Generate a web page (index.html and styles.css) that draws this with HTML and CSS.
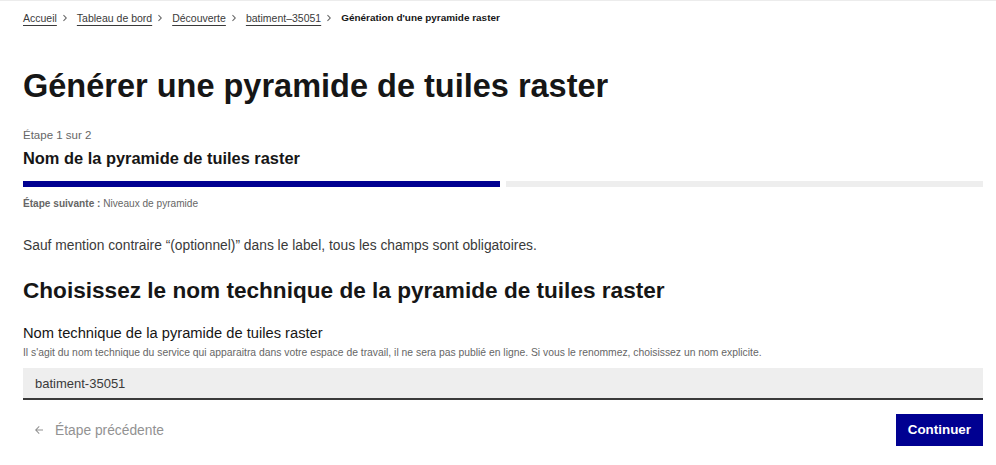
FILE: index.html
```html
<!DOCTYPE html>
<html lang="fr">
<head>
<meta charset="utf-8">
<title>Générer une pyramide de tuiles raster</title>
<link rel="stylesheet" href="styles.css">
</head>
<body>
<div class="page">
  <nav class="breadcrumb" aria-label="vous êtes ici :">
    <ol class="crumbs">
      <li><a class="crumb-link" href="#">Accueil</a></li>
      <li class="sep"><svg viewBox="0 0 24 24" class="chev"><path d="M13.172 12l-4.95-4.95 1.414-1.414L16 12l-6.364 6.364-1.414-1.414z"/></svg></li>
      <li><a class="crumb-link" href="#">Tableau de bord</a></li>
      <li class="sep"><svg viewBox="0 0 24 24" class="chev"><path d="M13.172 12l-4.95-4.95 1.414-1.414L16 12l-6.364 6.364-1.414-1.414z"/></svg></li>
      <li><a class="crumb-link" href="#">Découverte</a></li>
      <li class="sep"><svg viewBox="0 0 24 24" class="chev"><path d="M13.172 12l-4.95-4.95 1.414-1.414L16 12l-6.364 6.364-1.414-1.414z"/></svg></li>
      <li><a class="crumb-link" href="#">batiment–35051</a></li>
      <li class="sep"><svg viewBox="0 0 24 24" class="chev"><path d="M13.172 12l-4.95-4.95 1.414-1.414L16 12l-6.364 6.364-1.414-1.414z"/></svg></li>
      <li><span class="crumb-current" aria-current="page">Génération d'une pyramide raster</span></li>
    </ol>
  </nav>

  <h1 class="title">Générer une pyramide de tuiles raster</h1>

  <div class="stepper">
    <p class="stepper-state">Étape 1 sur 2</p>
    <h2 class="stepper-title">Nom de la pyramide de tuiles raster</h2>
    <div class="stepper-bars">
      <div class="bar bar-done"></div>
      <div class="bar"></div>
    </div>
    <p class="stepper-next"><span class="strong">Étape suivante :</span> Niveaux de pyramide</p>
  </div>

  <p class="mandatory">Sauf mention contraire “(optionnel)” dans le label, tous les champs sont obligatoires.</p>

  <h3 class="section-title">Choisissez le nom technique de la pyramide de tuiles raster</h3>

  <div class="field">
    <label class="label" for="tech-name">Nom technique de la pyramide de tuiles raster</label>
    <p class="hint">Il s'agit du nom technique du service qui apparaitra dans votre espace de travail, il ne sera pas publié en ligne. Si vous le renommez, choisissez un nom explicite.</p>
    <input class="input" id="tech-name" type="text" value="batiment-35051">
  </div>

  <div class="actions">
    <button class="btn-prev" type="button" disabled>
      <svg viewBox="0 0 24 24" class="arrow"><path d="M7.828 11H20v2H7.828l5.364 5.364-1.414 1.414L4 12l7.778-7.778 1.414 1.414z"/></svg>
      <span>Étape précédente</span>
    </button>
    <button class="btn-primary" type="button">Continuer</button>
  </div>
</div>
</body>
</html>
```
FILE: styles.css
```css
* { box-sizing: border-box; }

html, body {
  margin: 0;
  padding: 0;
  background: #ffffff;
}

body {
  font-family: "Liberation Sans", Arial, sans-serif;
  color: #3a3a3a;
  border-top: 1px solid #ececec;
}

.page {
  padding: 8px 13px 0 23px;
}

/* Breadcrumb */
.crumbs {
  list-style: none;
  margin: 0;
  padding: 0;
  display: flex;
  align-items: center;
  font-size: 10.5px;
  line-height: 16px;
}

.crumb-link {
  color: #3a3a3a;
  text-decoration: underline;
  text-decoration-color: #3a3a3a;
  text-underline-offset: 3px;
  text-decoration-thickness: 1px;
}

.crumb-current {
  color: #161616;
  font-weight: bold;
  font-size: 9.95px;
}

.sep {
  display: flex;
  align-items: center;
  margin: 0 6px 0 2px;
}

.chev {
  width: 12px;
  height: 12px;
  fill: #666666;
}

/* Title */
.title {
  margin: 40px 0 0;
  font-size: 32.5px;
  line-height: 40px;
  font-weight: bold;
  color: #161616;
}

/* Stepper */
.stepper-state {
  margin: 21px 0 0;
  font-size: 11.5px;
  line-height: 16px;
  color: #666666;
}

.stepper-title {
  margin: 4px 0 0;
  font-size: 16.4px;
  line-height: 22px;
  font-weight: bold;
  color: #161616;
}

.stepper-bars {
  margin-top: 12px;
  display: flex;
  gap: 6px;
}

.bar {
  flex: 1;
  height: 6px;
  background: #eeeeee;
}

.bar-done {
  background: #000091;
}

.stepper-next {
  margin: 10px 0 0;
  font-size: 10.1px;
  line-height: 14px;
  color: #666666;
}

.strong {
  font-weight: bold;
}

/* Body text */
.mandatory {
  margin: 25px 0 0;
  font-size: 13.8px;
  line-height: 20px;
  color: #3a3a3a;
}

.section-title {
  margin: 21px 0 0;
  font-size: 22.6px;
  line-height: 28px;
  font-weight: bold;
  color: #161616;
}

/* Field */
.field {
  margin-top: 18px;
}

.label {
  display: block;
  font-size: 14.7px;
  line-height: 20px;
  color: #161616;
}

.hint {
  margin: 3px 0 0;
  font-size: 10.35px;
  line-height: 14px;
  color: #666666;
}

.input {
  display: block;
  width: 100%;
  margin-top: 8px;
  height: 32px;
  padding: 0 12px;
  border: 0;
  border-bottom: 2px solid #3a3a3a;
  border-radius: 0;
  background: #eeeeee;
  font-family: "Liberation Sans", Arial, sans-serif;
  font-size: 13px;
  color: #3a3a3a;
  outline: none;
}

/* Actions */
.actions {
  margin-top: 14px;
  display: flex;
  justify-content: space-between;
  align-items: center;
}

.btn-prev {
  display: flex;
  align-items: center;
  gap: 10px;
  padding: 0 0 0 10px;
  border: 0;
  background: transparent;
  font-family: "Liberation Sans", Arial, sans-serif;
  font-size: 13.8px;
  color: #929292;
  cursor: not-allowed;
}

.arrow {
  width: 12px;
  height: 12px;
  fill: #929292;
}

.btn-primary {
  height: 32px;
  padding: 0 12px;
  border: 0;
  background: #000091;
  color: #ffffff;
  font-family: "Liberation Sans", Arial, sans-serif;
  font-size: 13.4px;
  font-weight: bold;
  line-height: 32px;
}
```
